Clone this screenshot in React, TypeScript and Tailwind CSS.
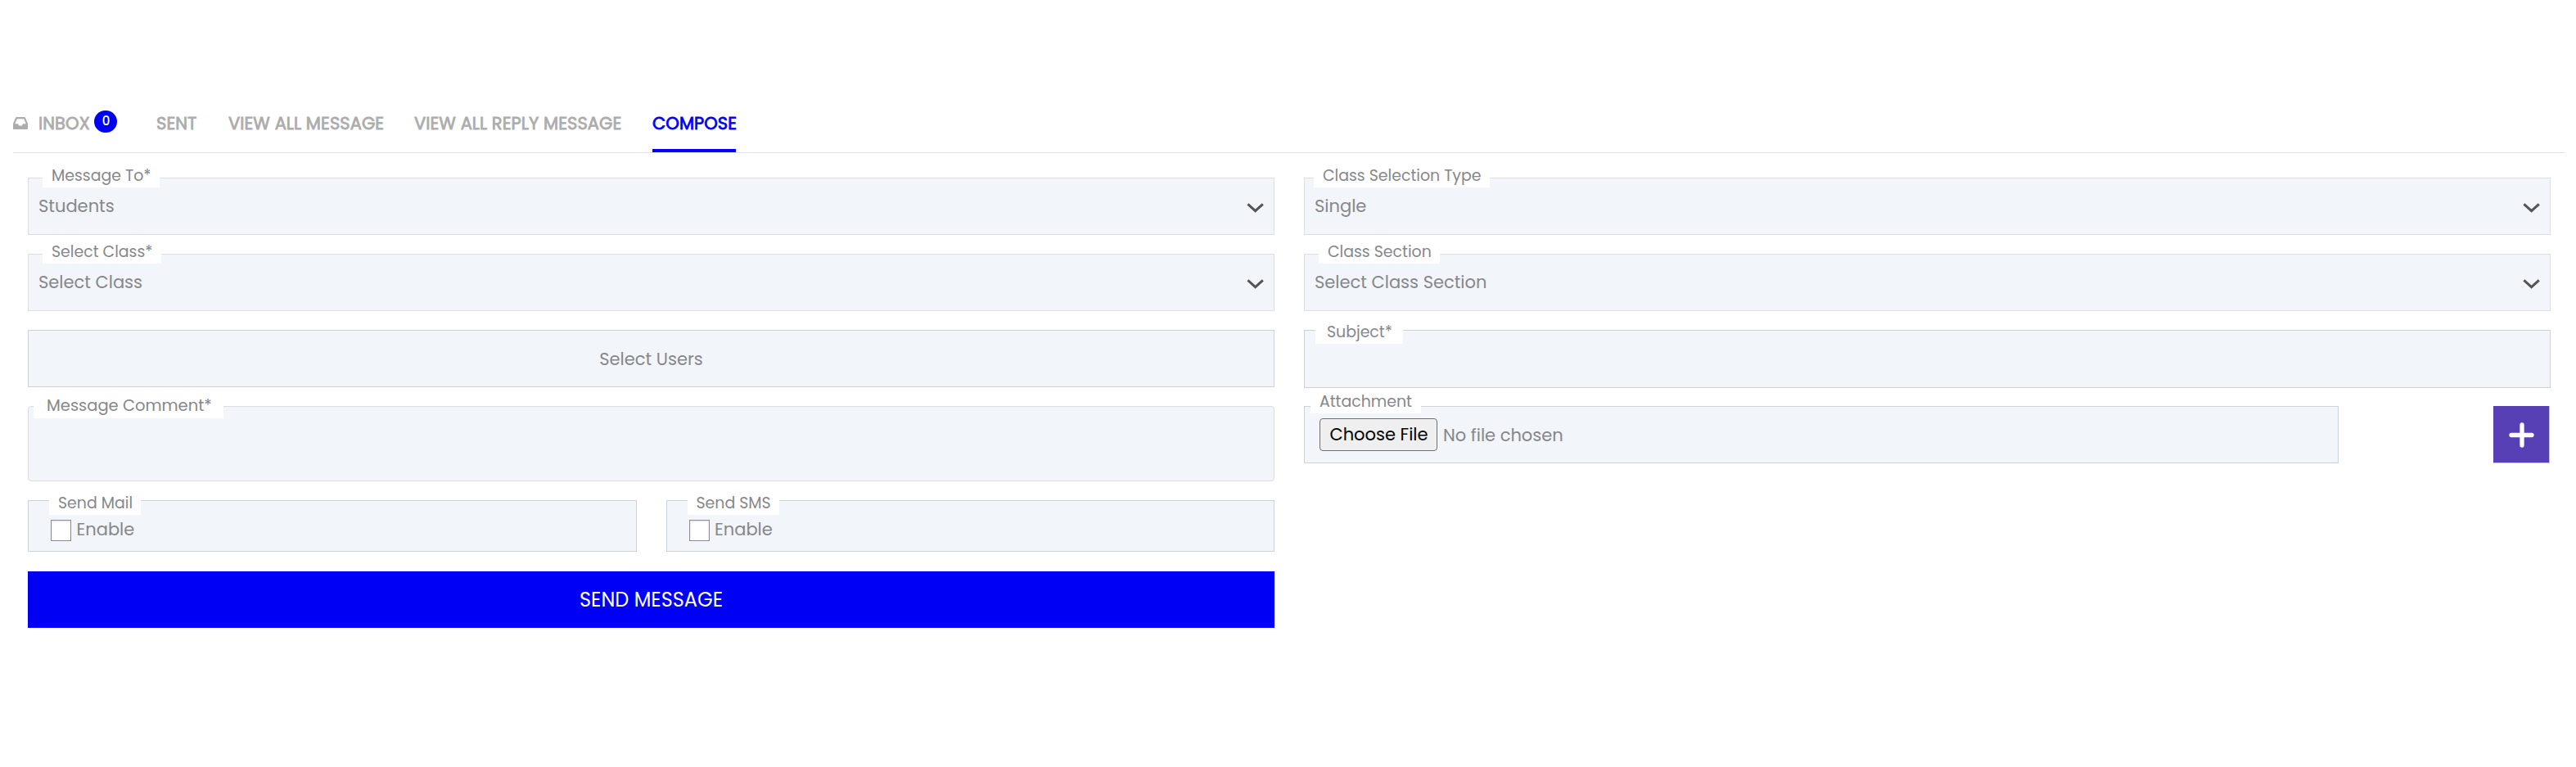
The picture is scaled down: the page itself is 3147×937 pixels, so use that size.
import type { ReactNode } from "react";

const BOX = "relative border bg-[#f2f5fa]";

function InboxIcon({ className }: { className: string }) {
  return (
    <svg className={className} viewBox="0 0 1536 1280" fill="currentColor">
      <path
        transform="matrix(1 0 0 -1 0 1280)"
        d="M1023 576h316q-1 3 -2.5 8t-2.5 8l-212 496h-708l-212 -496q-1 -2 -2.5 -8t-2.5 -8h316l95 -192h320zM1536 546v-482q0 -26 -19 -45t-45 -19h-1408q-26 0 -45 19t-19 45v482q0 62 25 123l238 552q10 25 36.5 42t52.5 17h832q26 0 52.5 -17t36.5 -42l238 -552q25 -61 25 -123z"
      />
    </svg>
  );
}

function Label({ children, className }: { children: ReactNode; className: string }) {
  return (
    <span
      className={`absolute h-[29px] whitespace-nowrap bg-white text-[18.9px] leading-[30px] ${className}`}
    >
      {children}
    </span>
  );
}

function SelectField({ label, labelClass, value }: { label: string; labelClass: string; value: string }) {
  return (
    <div className={`${BOX} flex h-[70px] items-start justify-between border-[#dbdfe4] pl-3 pr-3`}>
      <Label className={`-top-[18px] pl-[11px] ${labelClass}`}>{label}</Label>
      <span className="text-[21px] leading-[68px]">{value}</span>
      <svg className="mt-[30px] h-[12px] w-[21px]" viewBox="0 0 21 12" fill="none">
        <path d="M1.4 1.3 L10.6 9.6 L19.8 1.3" stroke="#555" strokeWidth="3.1" />
      </svg>
    </div>
  );
}

function CheckField({ label }: { label: string }) {
  return (
    <div className={`${BOX} flex h-[63px] flex-1 border-[#ccd2da] pl-[27px]`}>
      <Label className="-top-[12px] left-[25px] w-[112px] pl-[11px]">{label}</Label>
      <span className="mt-[23px] h-[26px] w-[25px] border border-[#8a8c90] bg-white shadow-[inset_0_1px_3px_rgba(0,0,0,0.12)]" />
      <span className="mt-[19px] pl-[6.5px] text-[21px] leading-[32px]">Enable</span>
    </div>
  );
}

const TAB =
  "text-[21px] leading-[30px] whitespace-nowrap tracking-[0.08px] [-webkit-text-stroke:0.8px_currentColor]";

export default function App() {
  return (
    <div className="h-[937px] w-[3147px] bg-white px-4 pt-[131px] font-['Poppins','Inter',sans-serif] text-[#85878a]">
      <nav className="flex h-[56px] w-[3118px] items-start border-b border-[#dee2e6] text-[#acacac]">
        <div className="flex w-[175px] items-start">
          <InboxIcon className="mt-[12px] h-[15px] w-[18px]" />
          <span className={`${TAB} ml-[13px] mt-[5px] w-[66px]`}>INBOX</span>
          <span className="ml-[2px] mt-[4px] flex h-[27px] w-[28px] items-center justify-center rounded-full bg-[#0000f5] text-[15px] font-medium leading-none text-white">
            <span className="-mt-[2px] ml-px">0</span>
          </span>
        </div>
        <span className={`${TAB} mt-[5px] w-[88px]`}>SENT</span>
        <span className={`${TAB} mt-[5px] w-[227px]`}>VIEW ALL MESSAGE</span>
        <span className={`${TAB} mt-[5px] w-[291px]`}>VIEW ALL REPLY MESSAGE</span>
        <span className="flex h-[55px] w-[102px] border-b-4 border-[#0000f5] text-[#0000f5]">
          <span className={`${TAB} mt-[5px]`}>COMPOSE</span>
        </span>
      </nav>

      <div className="mt-[30px] flex gap-9 pl-[18px]">
        <div className="flex w-[1523px] flex-col">
          <SelectField label="Message To*" labelClass="left-[17px] w-[143px]" value="Students" />
          <div className="mt-[23px]">
            <SelectField label="Select Class*" labelClass="left-[17px] w-[145px]" value="Select Class" />
          </div>
          <div className={`${BOX} mt-[23px] h-[70px] border-[#ccd2da] text-center text-[21px] leading-[69px]`}>
            Select Users
          </div>
          <div className={`${BOX} mt-[23px] h-[92px] rounded-[4px] border-[#dcdde0]`}>
            <span className="absolute -top-[18px] left-[6px] h-[32px] w-[232px] whitespace-nowrap bg-white pl-4 text-[19.5px] leading-[33px]">
              Message Comment*
            </span>
          </div>
          <div className="mt-[23px] flex gap-9">
            <CheckField label="Send Mail" />
            <CheckField label="Send SMS" />
          </div>
          <button className="mt-[24px] h-[69px] bg-[#0000f5] text-[24px] leading-[69px] text-white">
            SEND MESSAGE
          </button>
        </div>

        <div className="flex w-[1523px] flex-col">
          <SelectField label="Class Selection Type" labelClass="left-[11px] w-[215px]" value="Single" />
          <div className="mt-[23px]">
            <SelectField label="Class Section" labelClass="left-[17px] w-[148px]" value="Select Class Section" />
          </div>
          <div className={`${BOX} mt-[23px] h-[71px] border-[#ccd2da]`}>
            <span className="absolute -top-[18px] left-[13px] h-[34px] w-[107px] whitespace-nowrap bg-white pl-[14px] text-[18.9px] leading-[39px]">
              Subject*
            </span>
          </div>
          <div className="mt-[22px] flex justify-between">
            <div className={`${BOX} flex h-[70px] w-[1264px] border-[#ccd2da] pl-[18px]`}>
              <span className="absolute -top-[22px] left-[7px] h-[30px] w-[135px] whitespace-nowrap bg-white pl-[11px] text-[18.9px] leading-[31px]">
                Attachment
              </span>
              <span className="mt-[14px] h-[40px] w-[144px] rounded-[4px] border border-[#6f6f6f] bg-[#efefef] pl-px text-center text-[21px] leading-[37px] text-black">
                Choose File
              </span>
              <span className="mt-[14px] pl-[7px] text-[21px] leading-[41px]">No file chosen</span>
            </div>
            <div className="mr-px flex h-[70px] w-[69px] items-center justify-center border-b border-r border-[#c3bfdc] bg-[#573fb6]">
              <svg className="h-[32px] w-[32px]" viewBox="0 0 32 32" fill="none">
                <path d="M17 4 V29 M4 16.5 H29" stroke="#fff" strokeWidth="5.3" strokeLinecap="round" />
              </svg>
            </div>
          </div>
        </div>
      </div>
    </div>
  );
}
